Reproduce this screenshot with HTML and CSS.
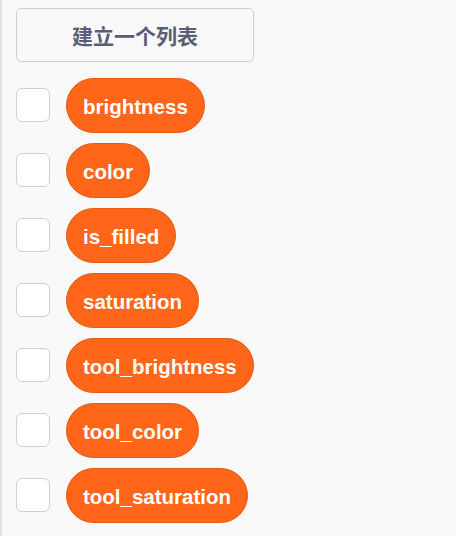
FILE: index.html
```html
<!DOCTYPE html>
<html lang="zh">
<head>
    <meta charset="UTF-8">
    <title>列表</title>
    <link rel="stylesheet" href="styles.css">
</head>
<body>
    <div class="palette">
        <button class="make-list">建立一个列表</button>
        <ul class="var-list">
            <li><span class="check"></span><span class="var-pill">brightness</span></li>
            <li><span class="check"></span><span class="var-pill">color</span></li>
            <li><span class="check"></span><span class="var-pill">is_filled</span></li>
            <li><span class="check"></span><span class="var-pill">saturation</span></li>
            <li><span class="check"></span><span class="var-pill">tool_brightness</span></li>
            <li><span class="check"></span><span class="var-pill">tool_color</span></li>
            <li><span class="check"></span><span class="var-pill">tool_saturation</span></li>
        </ul>
    </div>
</body>
</html>
```

FILE: styles.css
```css
* {
    padding: 0;
    margin: 0;
    box-sizing: border-box;
    font-family: "Liberation Sans", "Noto Sans CJK SC", sans-serif;
}
html, body {
    height: 100%;
}
body {
    background: #f9f9f9;
}
.palette {
    min-height: 100%;
    border-left: 2px solid #e4e4e4;
    padding: 8px 0 0 14px;
}
.make-list {
    display: block;
    width: 238px;
    height: 54px;
    background: #f9f9f9;
    border: 1px solid #cfcfcf;
    border-radius: 5px;
    color: #575e75;
    font-size: 21px;
    font-weight: bold;
}
.var-list {
    list-style: none;
    margin-top: 16px;
    display: flex;
    flex-direction: column;
    gap: 11px;
}
.var-list li {
    display: flex;
    align-items: center;
    gap: 16px;
    height: 54px;
}
.check {
    width: 34px;
    height: 34px;
    background: white;
    border: 1px solid #d0d0d0;
    border-radius: 6px;
}
.var-pill {
    height: 55px;
    line-height: 55px;
    padding: 0 16px;
    background: #ff661a;
    border: 1px solid #e65a12;
    border-radius: 28px;
    color: white;
    font-size: 20.5px;
    font-weight: bold;
}
```
